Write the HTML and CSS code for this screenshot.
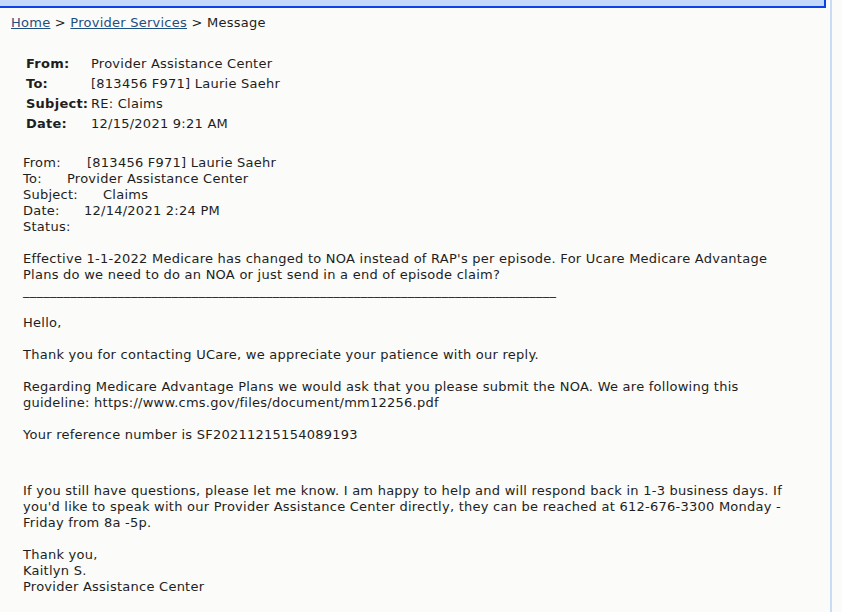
FILE: index.html
```html
<!DOCTYPE html>
<html>
<head>
<meta charset="utf-8">
<title>Message</title>
<link rel="stylesheet" href="styles.css">
</head>
<body>
<div class="page">
  <div class="topbar"></div>
  <div class="crumbs"><a href="#">Home</a> &gt; <a href="#">Provider Services</a> &gt; Message</div>
  <div class="meta">
    <div class="label">From:</div><div>Provider Assistance Center</div>
    <div class="label">To:</div><div>[813456 F971] Laurie Saehr</div>
    <div class="label">Subject:</div><div>RE: Claims</div>
    <div class="label">Date:</div><div>12/15/2021 9:21 AM</div>
  </div>
  <div class="body">
    <div><span class="k k-from">From:</span>[813456 F971] Laurie Saehr</div>
    <div><span class="k k-to">To:</span>Provider Assistance Center</div>
    <div><span class="k k-subj">Subject:</span>Claims</div>
    <div><span class="k k-date">Date:</span>12/14/2021 2:24 PM</div>
    <div>Status:</div>
    <br>
    <div>Effective 1-1-2022 Medicare has changed to NOA instead of RAP's per episode. For Ucare Medicare Advantage<br>Plans do we need to do an NOA or just send in a end of episode claim?</div>
    <div class="rule">_______________________________________________________________________________</div>
    <br>
    <div>Hello,</div>
    <br>
    <div>Thank you for contacting UCare, we appreciate your patience with our reply.</div>
    <br>
    <div>Regarding Medicare Advantage Plans we would ask that you please submit the NOA. We are following this<br>guideline: https://www.cms.gov/files/document/mm12256.pdf</div>
    <br>
    <div>Your reference number is SF20211215154089193</div>
    <br>
    <br>
    <div class="closing">If you still have questions, please let me know. I am happy to help and will respond back in 1-3 business days. If<br>you'd like to speak with our Provider Assistance Center directly, they can be reached at 612-676-3300 Monday -<br>Friday from 8a -5p.</div>
    <br>
    <div>Thank you,<br>Kaitlyn S.<br>Provider Assistance Center</div>
  </div>
</div>
</body>
</html>
```
FILE: styles.css
```css
html, body {
  margin: 0;
  padding: 0;
  background: #fbfbf9;
}
body {
  font-family: "DejaVu Sans", Verdana, sans-serif;
  font-size: 13px;
  line-height: 16px;
  letter-spacing: 0.25px;
  color: #1e1e1e;
}
.page {
  width: 830px;
  min-height: 612px;
  border-right: 2px solid #c9dbf5;
  box-sizing: content-box;
}
.topbar {
  width: 824px;
  height: 6px;
  background: #c4d8fa;
  border-bottom: 2px solid #0a44e6;
  border-right: 2px solid #0a44e6;
}
.crumbs {
  margin-top: 7px;
  padding-left: 11px;
}
.crumbs a {
  color: #1f4f80;
  text-decoration: underline;
}
.meta {
  display: grid;
  grid-template-columns: 65px auto;
  grid-auto-rows: 20px;
  align-items: center;
  margin-top: 23px;
  padding-left: 26px;
}
.meta .label {
  font-weight: bold;
}
.body {
  margin-top: 21px;
  padding-left: 23px;
}
.k {
  display: inline-block;
}
.k-from { width: 64px; }
.k-to { width: 44px; }
.k-subj { width: 80px; }
.k-date { width: 61px; }
.rule {
  white-space: nowrap;
}
.closing {
  margin-top: 8px;
}
```
